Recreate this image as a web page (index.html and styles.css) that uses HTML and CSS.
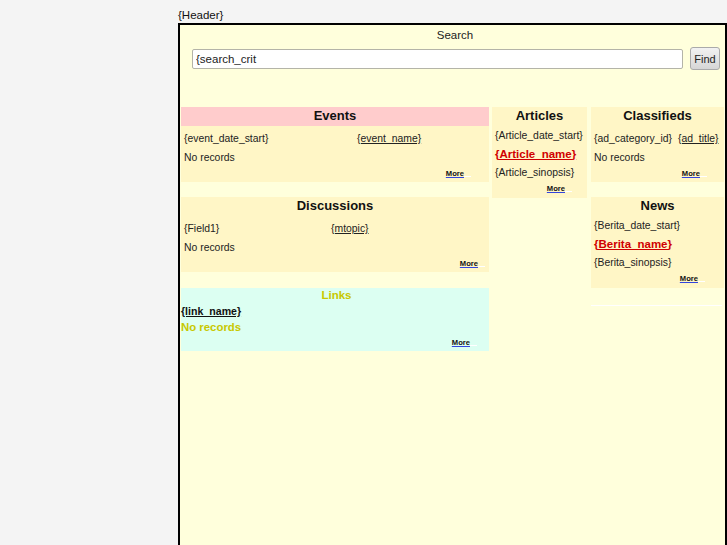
FILE: index.html
```html
<!DOCTYPE html>
<html>
<head>
<meta charset="utf-8">
<link rel="stylesheet" href="styles.css">
</head>
<body>
<div class="page">
  <div class="side"></div>
  <div class="main">
    <div class="header">{Header}</div>
    <div class="box">
      <div class="search">
        <div class="search-label">Search</div>
        <div class="search-row">
          <input class="search-input" type="text" value="{search_crit">
          <button class="find">Find</button>
        </div>
      </div>
      <div class="cols">
        <div class="col col-left">
          <div class="panel p-events">
            <div class="title pink">Events</div>
            <div class="rows">
              <div class="row two ev"><span>{event_date_start}</span><a class="lnk">{event_name}</a></div>
              <div class="row">No records</div>
              <div class="more-row r25"><a class="more">More</a><span class="tail"></span></div>
            </div>
          </div>
          <div class="panel p-disc">
            <div class="title">Discussions</div>
            <div class="rows">
              <div class="row two ds"><span>{Field1}</span><a class="lnk">{mtopic}</a></div>
              <div class="row">No records</div>
              <div class="more-row r11"><a class="more">More</a><span class="tail"></span></div>
            </div>
          </div>
          <div class="panel p-links">
            <div class="links-title">Links</div>
            <div class="links-name"><a class="lnk-b">{link_name}</a></div>
            <div class="links-none">No records</div>
            <div class="more-row r19"><a class="more">More</a><span class="tail"></span></div>
          </div>
        </div>
        <div class="col col-mid">
          <div class="panel p-art">
            <div class="title">Articles</div>
            <div class="rows">
              <div class="row">{Article_date_start}</div>
              <div class="row"><a class="red">{Article_name}</a></div>
              <div class="row">{Article_sinopsis}</div>
              <div class="more-row r22"><a class="more">More</a><span class="tail"></span></div>
            </div>
          </div>
        </div>
        <div class="col col-right">
          <div class="panel p-class">
            <div class="title">Classifieds</div>
            <div class="rows">
              <div class="row two cl"><span>{ad_category_id}</span><a class="lnk">{ad_title}</a></div>
              <div class="row">No records</div>
              <div class="more-row r24"><a class="more">More</a><span class="tail"></span></div>
            </div>
          </div>
          <div class="panel p-news">
            <div class="title">News</div>
            <div class="rows">
              <div class="row">{Berita_date_start}</div>
              <div class="row"><a class="red">{Berita_name}</a></div>
              <div class="row">{Berita_sinopsis}</div>
              <div class="more-row r26"><a class="more">More</a><span class="tail"></span></div>
            </div>
          </div>
          <div class="white-line"></div>
        </div>
      </div>
    </div>
  </div>
</div>
</body>
</html>
```
FILE: styles.css
```css
html, body {
  margin: 0;
  padding: 0;
  background: #f4f4f4;
  font-family: "Liberation Sans", Arial, sans-serif;
  color: #222;
  overflow: hidden;
}
.page {
  display: flex;
  padding-top: 8px;
}
.side {
  width: 178px;
  flex: none;
}
.main {
  flex: none;
  width: 549px;
}
.header {
  font-size: 11.5px;
  line-height: 15px;
  height: 15px;
  color: #111;
}
.box {
  border: 2px solid #000;
  border-bottom: none;
  background: #ffffdc;
  height: 522px;
  width: 549px;
  box-sizing: border-box;
  padding: 0 1px;
}
.search {
  height: 82px;
}
.search-label {
  font-size: 11.5px;
  line-height: 15px;
  padding-top: 3px;
  text-align: center;
  padding-left: 5px;
  color: #222;
}
.search-row {
  display: flex;
  align-items: center;
  padding-top: 4px;
  padding-left: 11px;
}
.search-input {
  width: 491px;
  height: 20px;
  box-sizing: border-box;
  border: 1px solid #b4b4a8;
  border-radius: 2px;
  background: #fff;
  font-family: "Liberation Sans", Arial, sans-serif;
  font-size: 11.5px;
  padding: 0 3px;
  margin: 0;
  color: #222;
}
.find {
  margin: 0 0 0 7px;
  width: 30px;
  height: 23px;
  box-sizing: border-box;
  border: 1px solid #aaa;
  border-radius: 3px;
  background: linear-gradient(#f2f2f2, #d6d6d6);
  font-family: "Liberation Sans", Arial, sans-serif;
  font-size: 11px;
  padding: 0;
  color: #222;
}
.cols {
  display: flex;
  align-items: flex-start;
}
.col {
  display: flex;
  flex-direction: column;
  flex: none;
}
.col-left { width: 308px; }
.col-mid { width: 95px; margin-left: 3px; }
.col-right { width: 133px; margin-left: 4px; }
.panel {
  background: #fff6c6;
}
.p-disc, .p-news { margin-top: 15px; }
.p-links {
  margin-top: 16px;
  background: #dcfff2;
  height: 63px;
}
.title {
  font-size: 13px;
  font-weight: bold;
  text-align: center;
  height: 19px;
  line-height: 18px;
  color: #111;
}
.title.pink { background: #ffcccc; }
.rows {
  padding: 3px 0 2px 3px;
  font-size: 10.4px;
}
.p-art .rows, .p-news .rows { padding-top: 0; padding-left: 3px; }
.row {
  height: 19px;
  line-height: 19px;
  white-space: nowrap;
}
.p-art .row, .p-news .row { height: 18.5px; line-height: 19px; }
.two { display: flex; }
.ev span { width: 173px; }
.ds span { width: 147px; }
.cl span { width: 84px; }
.lnk {
  color: #222;
  text-decoration: underline;
}
.red {
  color: #d00000;
  font-weight: bold;
  font-size: 11.5px;
  text-decoration: underline;
}
.more-row {
  height: 13px;
  line-height: 13px;
  display: flex;
  justify-content: flex-end;
  align-items: center;
}
.p-art .more-row, .p-news .more-row { height: 14px; }
.r25 { padding-right: 25px; }
.r11 { padding-right: 11px; }
.r19 { padding-right: 19px; }
.r22 { padding-right: 22px; }
.r24 { padding-right: 24px; }
.r26 { padding-right: 26px; }
.more {
  font-size: 7.6px;
  font-weight: bold;
  color: #111;
  text-decoration: underline;
  text-decoration-color: #3344dd;
}
.tail {
  display: inline-block;
  width: 7px;
  height: 1px;
  background: #fff;
  margin-top: 6px;
  margin-right: -7px;
}
.links-title {
  font-size: 11.5px;
  color: #c8c800;
  text-align: center;
  height: 15px;
  line-height: 15px;
  font-weight: bold;
  padding-left: 3px;
}
.links-name {
  font-size: 10.6px;
  height: 16px;
  line-height: 16px;
}
.lnk-b {
  color: #111;
  font-weight: bold;
  text-decoration: underline;
}
.links-none {
  font-size: 11.4px;
  font-weight: bold;
  color: #c8c800;
  height: 16px;
  line-height: 16px;
}
.p-links .more-row { height: 15px; }
.white-line {
  height: 1px;
  background: #fff;
  margin-top: 17px;
  width: 131px;
}
```
